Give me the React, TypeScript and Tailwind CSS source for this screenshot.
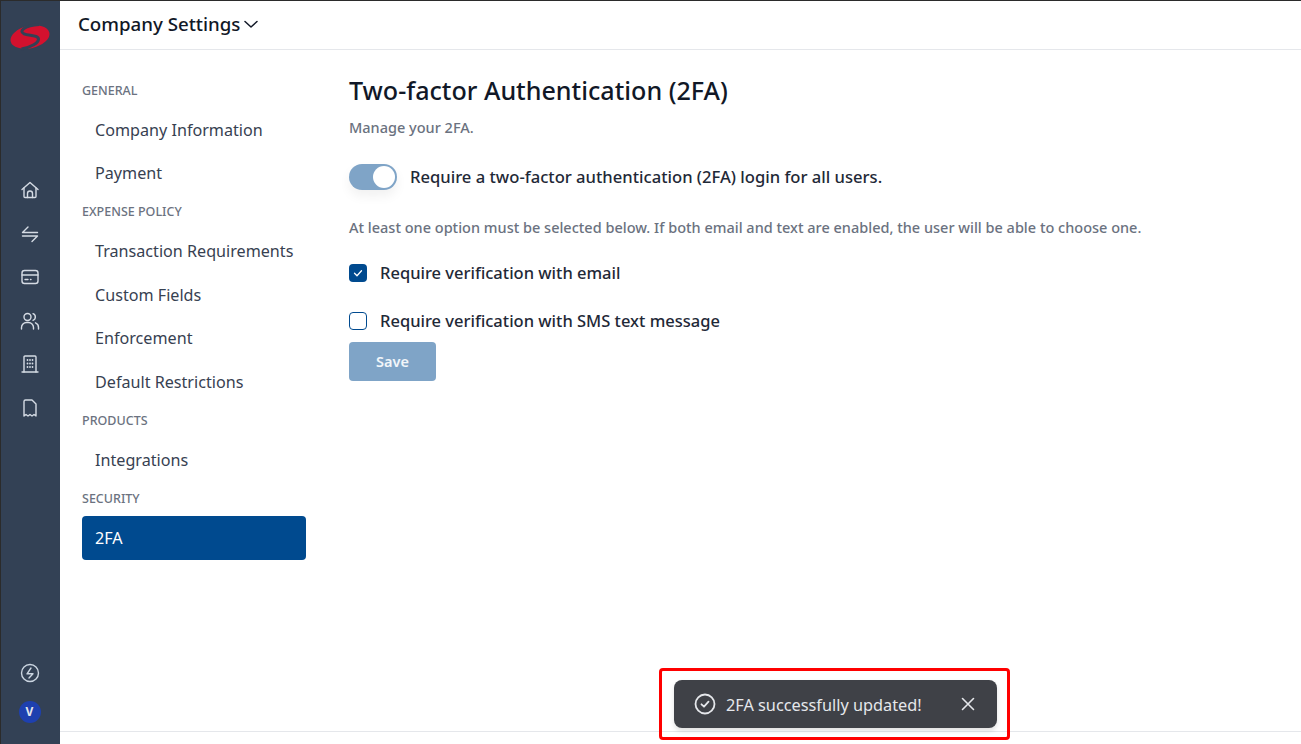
import React from "react";

const font = { fontFamily: '"Noto Sans", sans-serif' };

function Label({ children }: { children: React.ReactNode }) {
  return <div className="h-[34.5px] pt-[9.5px] text-[12.5px] leading-4 font-medium text-[#6b7280]">{children}</div>;
}

function Item({ children, active }: { children: React.ReactNode; active?: boolean }) {
  return (
    <div className={"h-[43.6px] flex items-center pl-[13px] pt-[0.8px] rounded text-[16.15px] " + (active ? "bg-[#004a8f] text-white" : "text-[#374151]")}>
      {children}
    </div>
  );
}

function SideIcon({ children }: { children: React.ReactNode }) {
  return (
    <svg width="20" height="20" viewBox="0 0 20 20" fill="none" stroke="#d5dbe4" strokeWidth="1.4" strokeLinecap="round" strokeLinejoin="round">
      {children}
    </svg>
  );
}

export default function App() {
  return (
    <div className="relative w-[1301px] h-[744px] overflow-hidden bg-white flex border-t border-l border-[#2b2b2b]" style={font}>
      <aside className="w-[59px] shrink-0 bg-[#334155] flex flex-col items-center">
        <svg className="mt-[22px] mr-[1px]" width="40" height="28" viewBox="0 0 40 28">
          <ellipse cx="20" cy="14" rx="19.800" ry="11.200" transform="rotate(-13 20 14)" fill="#d3112e" />
          <path d="M29 1.500C15 2.500 8 8 14 10.800c4.500 2 14.500 1.200 14.500 5.200 0 4-7 8-17 10" fill="none" stroke="#334155" strokeWidth="3" />
        </svg>
        <nav className="mt-[129px] mr-[2px] flex flex-col gap-[23.5px]">
          <SideIcon>
            <path d="M2 9.500 10 2.500l8 7" />
            <path d="M4 8v8.500a1 1 0 0 0 1 1h10a1 1 0 0 0 1-1V8" />
            <path d="M7.500 17.500v-4a2.500 2.500 0 0 1 5 0v4" />
          </SideIcon>
          <SideIcon>
            <path d="M17.500 8.500h-15L8 3" />
            <path d="M2.500 12h15L12 17.500" />
          </SideIcon>
          <SideIcon>
            <rect x="2" y="3.500" width="16" height="13" rx="2.500" />
            <path d="M2 8h16" />
            <path d="M5 12.500h3M10.500 12.500h.5" />
          </SideIcon>
          <SideIcon>
            <circle cx="7.500" cy="6" r="3.500" />
            <path d="M1.500 18v-1.500a5 5 0 0 1 5-5h2a5 5 0 0 1 5 5V18" />
            <path d="M13 2.700a3.500 3.500 0 0 1 0 6.600M15.500 11.800a5 5 0 0 1 3 4.700V18" />
          </SideIcon>
          <SideIcon>
            <path d="M4 18V3a1 1 0 0 1 1-1h10a1 1 0 0 1 1 1v15" />
            <path d="M2 18h16" />
            <path d="M7.500 6h.01M10 6h.01M12.500 6h.01M7.500 9.500h.01M10 9.500h.01M12.500 9.500h.01M7.500 13h.01M10 13h.01M12.500 13h.01" strokeWidth="1.800" />
          </SideIcon>
          <SideIcon>
            <path d="M4 3.500A1.500 1.500 0 0 1 5.500 2H12l4 4v12l-2-1.500-2 1.500-2-1.500L8 18l-2-1.500L4 18Z" />
          </SideIcon>
        </nav>
        <div className="mt-auto mr-[2px] flex flex-col items-center">
          <svg width="20" height="20" viewBox="0 0 20 20" fill="none" stroke="#cbd5e1" strokeWidth="1.400" strokeLinecap="round" strokeLinejoin="round">
            <circle cx="10" cy="10" r="8.500" />
            <path d="M11 5 7 10.800h6L9 15" />
          </svg>
          <div className="mt-[18px] mb-[21px] w-[22px] h-[22px] rounded-full bg-[#1e40af] text-[#e5e7eb] text-xs font-bold flex items-center justify-center">V</div>
        </div>
      </aside>

      <div className="flex-1 flex flex-col min-w-0">
        <header className="h-[49px] shrink-0 border-b border-[#e5e7eb] flex items-center pl-[18px] gap-[2px] text-[18.7px] font-medium text-[#111827]">
          <span className="mb-[2px]">Company Settings</span>
          <svg width="18" height="18" viewBox="0 0 18 18" fill="none" stroke="#111827" strokeWidth="1.500" strokeLinecap="round" strokeLinejoin="round" className="mb-[3px]">
            <path d="m3 6.500 6 5.500 6-5.500" />
          </svg>
        </header>

        <div className="flex-1 flex min-h-0 border-b border-[#e5e7eb] mb-3">
          <div className="w-[224px] ml-[22px] pt-[23px] shrink-0">
            <Label>GENERAL</Label>
            <Item>Company Information</Item>
            <Item>Payment</Item>
            <Label>EXPENSE POLICY</Label>
            <Item>Transaction Requirements</Item>
            <Item>Custom Fields</Item>
            <Item>Enforcement</Item>
            <Item>Default Restrictions</Item>
            <Label>PRODUCTS</Label>
            <Item>Integrations</Item>
            <Label>SECURITY</Label>
            <Item active>2FA</Item>
          </div>

          <main className="ml-[43px] pt-[24px] flex-1 min-w-0">
            <h1 className="text-[25.1px] leading-8 font-medium text-[#111827]">Two-factor Authentication (2FA)</h1>
            <p className="mt-[11px] text-[14.5px] leading-5 font-medium text-[#6b7280]">Manage your 2FA.</p>
            <div className="mt-[27px] flex items-center h-[26px]">
              <div className="w-12 h-[26px] rounded-full bg-[#7fa4c7] flex items-center justify-end pr-[2px] shadow-[0_6px_12px_rgba(0,0,0,0.06)]">
                <div className="w-[22px] h-[22px] rounded-full bg-white" />
              </div>
              <span className="ml-[13px] text-[16.6px] font-medium text-[#1f2937]">Require a two-factor authentication (2FA) login for all users.</span>
            </div>
            <p className="mt-[27px] text-[14.5px] leading-5 font-medium text-[#6b7280]">At least one option must be selected below. If both email and text are enabled, the user will be able to choose one.</p>
            <div className="mt-[24px] flex items-center h-6">
              <div className="w-[18px] h-[18px] rounded bg-[#004a8f] flex items-center justify-center">
                <svg width="12" height="12" viewBox="0 0 12 12" fill="none" stroke="#fff" strokeWidth="1.300" strokeLinecap="round" strokeLinejoin="round">
                  <path d="m2.500 6.300 2.500 2.400 4.500-5" />
                </svg>
              </div>
              <span className="ml-[13px] text-[16.5px] font-medium text-[#1f2937]">Require verification with email</span>
            </div>
            <div className="mt-6 flex items-center h-6">
              <div className="w-[18px] h-[18px] rounded border border-[#004a8f] bg-white" />
              <span className="ml-[13px] text-[16.5px] font-medium text-[#1f2937]">Require verification with SMS text message</span>
            </div>
            <button className="mt-[9px] w-[87px] h-[39px] pt-px rounded bg-[#7fa4c7] text-white/90 text-[14.5px] font-semibold">Save</button>
          </main>
        </div>
      </div>

      <div className="absolute left-[658px] top-[667px] w-[351px] h-[72px] border-[3px] border-[#ff0000] rounded-sm" />
      <div className="absolute left-[673px] top-[679px] w-[323px] h-[48px] rounded-lg bg-[#3f4147] text-[#e5e7eb] flex items-center pl-[20px] shadow-[0_3px_5px_rgba(0,0,0,0.12)]">
        <svg width="22" height="22" viewBox="0 0 22 22" fill="none" stroke="#e5e7eb" strokeWidth="1.800" strokeLinecap="round" strokeLinejoin="round">
          <circle cx="11" cy="11" r="9.500" />
          <path d="m7.500 11.300 2.500 2.400 4.500-5" />
        </svg>
        <span className="ml-[10px] mt-[2px] text-[16.3px]">2FA successfully updated!</span>
        <svg className="ml-auto mr-[22px]" width="14" height="14" viewBox="0 0 14 14" fill="none" stroke="#e5e7eb" strokeWidth="1.600" strokeLinecap="round">
          <path d="m1.500 1.500 11 11M12.500 1.500l-11 11" />
        </svg>
      </div>
    </div>
  );
}
